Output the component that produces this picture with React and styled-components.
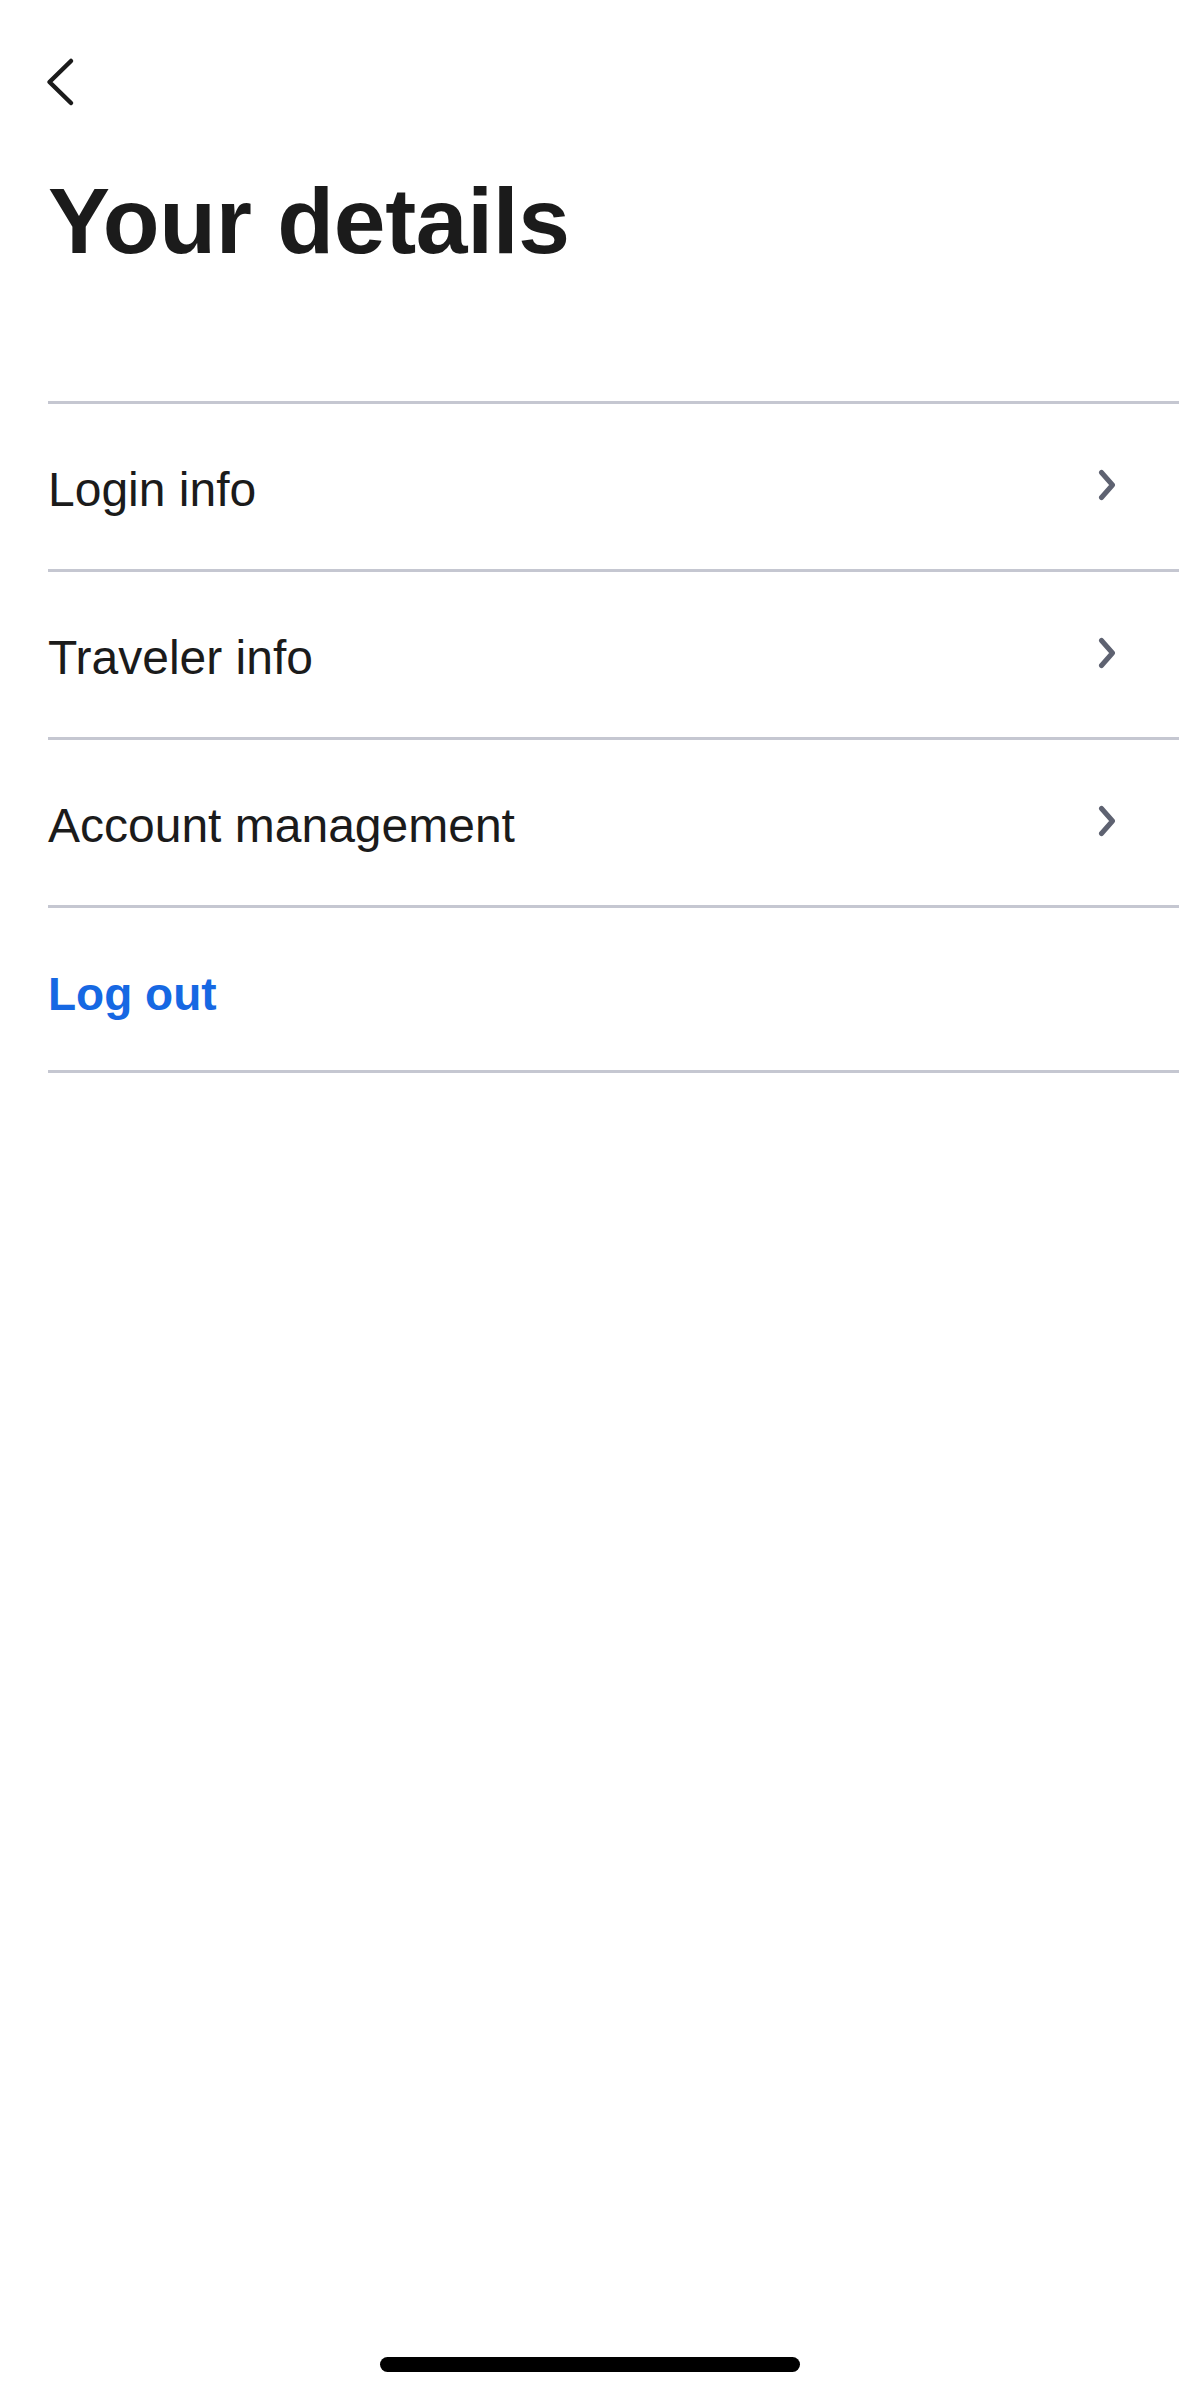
import React from 'react';
import styled, { createGlobalStyle } from 'styled-components';

const GlobalStyle = createGlobalStyle`
  html, body {
    margin: 0;
    padding: 0;
    background: #ffffff;
  }
  body {
    font-family: "Liberation Sans", Arial, sans-serif;
    color: #1b1b1b;
  }
`;

const Screen = styled.div`
  width: 1179px;
  min-height: 2396px;
  display: flex;
  flex-direction: column;
  background: #ffffff;
`;

const Header = styled.header`
  padding: 56px 0 0 44px;
`;

const BackButton = styled.button`
  display: block;
  width: 32px;
  height: 52px;
  padding: 0;
  border: 0;
  background: none;
  color: #1b1b1b;
  cursor: pointer;
`;

const Title = styled.h1`
  margin: 63px 0 0 48px;
  font-size: 93px;
  line-height: 100px;
  font-weight: 700;
  letter-spacing: -0.3px;
  color: #1b1b1b;
`;

const List = styled.nav`
  margin: 130px 0 0 48px;
  display: flex;
  flex-direction: column;
`;

const Row = styled.a`
  height: ${p => (p.$last ? '159px' : '165px')};
  display: flex;
  align-items: center;
  justify-content: space-between;
  padding: ${p => (p.$last ? '3px 0 0' : '0')};
  border-top: 3px solid #c5c7d1;
  border-bottom: ${p => (p.$last ? '3px solid #c5c7d1' : '0')};
  text-decoration: none;
  cursor: pointer;
`;

const Label = styled.span`
  margin-top: 6px;
  font-size: ${p => (p.$action ? '46px' : '48px')};
  line-height: 56px;
  font-weight: ${p => (p.$action ? 700 : 400)};
  color: ${p => (p.$action ? '#1668e3' : '#1b1b1b')};
`;

const Chevron = styled.svg`
  width: 20px;
  height: 32px;
  margin: 0 61px 3px 0;
  color: #5e6271;
`;

const Spacer = styled.div`
  flex: 1;
`;

const HomeIndicator = styled.div`
  align-self: center;
  width: 420px;
  height: 15px;
  margin-bottom: 24px;
  border-radius: 8px;
  background: #000000;
`;

const BackIcon = () => (
  <svg width="32" height="52" viewBox="0 0 32 52" fill="none">
    <polyline
      points="27,5 5.5,26 27,47"
      stroke="currentColor"
      strokeWidth="4.5"
      strokeLinecap="round"
      strokeLinejoin="round"
    />
  </svg>
);

const items = ['Login info', 'Traveler info', 'Account management'];

const App = () => {
  return (
    <Screen>
      <GlobalStyle />
      <Header>
        <BackButton aria-label="Back">
          <BackIcon />
        </BackButton>
      </Header>
      <Title>Your details</Title>
      <List>
        {items.map(item => (
          <Row key={item}>
            <Label>{item}</Label>
            <Chevron viewBox="0 0 20 32" fill="none">
              <polyline
                points="3.5,3.5 14.5,16 3.5,28.5"
                stroke="currentColor"
                strokeWidth="5"
                strokeLinecap="round"
                strokeLinejoin="round"
              />
            </Chevron>
          </Row>
        ))}
        <Row $last>
          <Label $action>Log out</Label>
        </Row>
      </List>
      <Spacer />
      <HomeIndicator />
    </Screen>
  );
};

export default App;
